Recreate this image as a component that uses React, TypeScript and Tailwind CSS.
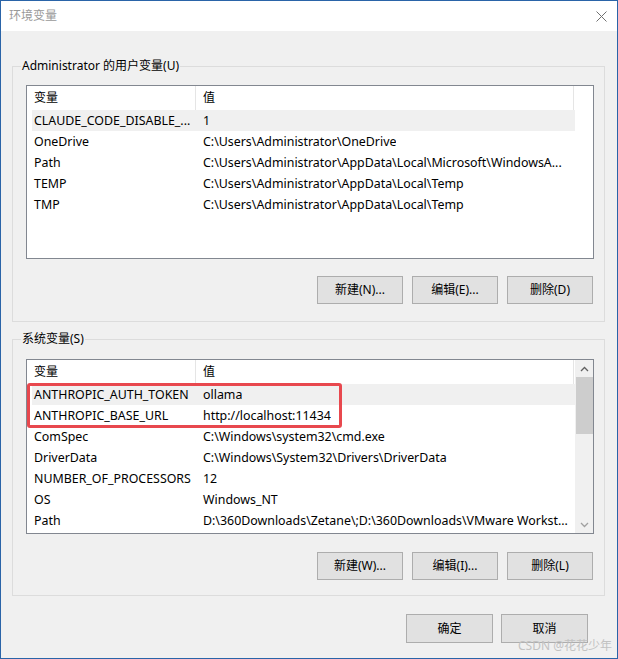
import clsx from "clsx";

type Item = { name: string; value: string; selected?: boolean };

const userVars: Item[] = [
  { name: "CLAUDE_CODE_DISABLE_...", value: "1", selected: true },
  { name: "OneDrive", value: "C:\\Users\\Administrator\\OneDrive" },
  { name: "Path", value: "C:\\Users\\Administrator\\AppData\\Local\\Microsoft\\WindowsA..." },
  { name: "TEMP", value: "C:\\Users\\Administrator\\AppData\\Local\\Temp" },
  { name: "TMP", value: "C:\\Users\\Administrator\\AppData\\Local\\Temp" },
];

const sysVars: Item[] = [
  { name: "ANTHROPIC_AUTH_TOKEN", value: "ollama", selected: true },
  { name: "ANTHROPIC_BASE_URL", value: "http://localhost:11434" },
  { name: "ComSpec", value: "C:\\Windows\\system32\\cmd.exe" },
  { name: "DriverData", value: "C:\\Windows\\System32\\Drivers\\DriverData" },
  { name: "NUMBER_OF_PROCESSORS", value: "12" },
  { name: "OS", value: "Windows_NT" },
  { name: "Path", value: "D:\\360Downloads\\Zetane\\;D:\\360Downloads\\VMware Workst..." },
];

function Button({ label, wide }: { label: string; wide?: boolean }) {
  return (
    <button
      className={clsx(
        "flex items-center justify-center border border-[#adadad] bg-[#e1e1e1] text-[12px] text-black",
        wide ? "h-[29px] w-[87px]" : "h-[28px] w-[86px]"
      )}
    >
      {label}
    </button>
  );
}

function Row({ item }: { item: Item }) {
  return (
    <div
      className={clsx(
        "ml-[5px] flex h-[21px] w-[543px] items-center whitespace-nowrap pt-px",
        item.selected && "bg-[#f0f0f0]"
      )}
    >
      <div className="w-[163px] shrink-0 overflow-hidden pl-[2px]">{item.name}</div>
      <div className="overflow-hidden pl-[8px]">{item.value}</div>
    </div>
  );
}

function VarList({ items, scroll, height }: { items: Item[]; scroll?: boolean; height: string }) {
  return (
    <div className={clsx("relative flex w-[568px] overflow-hidden border border-[#828790] bg-white text-[12.4px]", height)}>
      <div className="w-[548px] shrink-0">
        {/* column header */}
        <div className="flex h-[24px] w-[547px] items-center text-[12px]">
          <div className="w-[168px] shrink-0 pl-[7px]">变量</div>
          <div className="h-full w-px bg-[#e5e5e5]" />
          <div className="flex-1 pl-[7px]">值</div>
          <div className="h-full w-px bg-[#e5e5e5]" />
        </div>
        {items.map((it) => (
          <Row key={it.name + it.value} item={it} />
        ))}
      </div>
      {scroll && (
        <div className="flex w-[18px] shrink-0 flex-col bg-[#f0f0f0] pl-px">
          <div className="flex h-[17px] items-center justify-center">
            <svg width="9" height="6" viewBox="0 0 9 6">
              <path d="M1 5 L4.5 1.5 L8 5" fill="none" stroke="#606060" strokeWidth="1.3" />
            </svg>
          </div>
          <div className="h-[57px] bg-[#cdcdcd]" />
          <div className="flex-1" />
          <div className="flex h-[17px] items-center justify-center">
            <svg width="9" height="6" viewBox="0 0 9 6">
              <path d="M1 1 L4.5 4.5 L8 1" fill="none" stroke="#a0a0a0" strokeWidth="1.3" />
            </svg>
          </div>
        </div>
      )}
    </div>
  );
}

function Group({
  title,
  children,
  className,
}: {
  title: string;
  children: React.ReactNode;
  className?: string;
}) {
  return (
    <div className={clsx("relative ml-[11px] w-[593px] border border-[#dcdcdc]", className)}>
      <span className="absolute -top-[9px] left-[8px] bg-[#f0f0f0] px-px leading-[16px]">{title}</span>
      {children}
    </div>
  );
}

export default function App() {
  return (
    <div className="relative flex h-[659px] w-[618px] flex-col border border-[#2a64a8] bg-[#f0f0f0] font-['Noto_Sans','Noto_Sans_CJK_SC',sans-serif] text-[12px] text-black">
      {/* title bar */}
      <div className="flex h-[30px] shrink-0 items-center justify-between bg-white pl-[8px] pr-[10px]">
        <span className="text-[#999999]">环境变量</span>
        <svg width="11" height="11" viewBox="0 0 11 11">
          <path d="M0.5 0.5 L10.5 10.5 M10.5 0.5 L0.5 10.5" stroke="#707070" strokeWidth="1" />
        </svg>
      </div>

      <Group title="Administrator 的用户变量(U)" className="mt-[35px] pb-[17px] pl-[13px] pt-[18px]">
        <VarList items={userVars} height="h-[174px]" />
        <div className="mr-[11px] mt-[17px] flex justify-end gap-[9px]">
          <Button label="新建(N)..." />
          <Button label="编辑(E)..." />
          <Button label="删除(D)" />
        </div>
      </Group>

      <Group title="系统变量(S)" className="mt-[17px] pb-[15px] pl-[13px] pt-[19px]">
        <div className="relative">
          <VarList items={sysVars} scroll height="h-[175px]" />
          <div className="absolute left-px top-[24px] h-[45px] w-[315px] rounded-[3px] border-[3px] border-[#e8484e]" />
        </div>
        <div className="mr-[11px] mt-[18px] flex justify-end gap-[9px]">
          <Button label="新建(W)..." />
          <Button label="编辑(I)..." />
          <Button label="删除(L)" />
        </div>
      </Group>

      <div className="mr-[29px] mt-[18px] flex justify-end gap-[8px]">
        <Button label="确定" wide />
        <Button label="取消" wide />
      </div>

      <span className="absolute bottom-[3px] right-[5px] text-[12px] text-[#c2c2c2]">CSDN @花花少年</span>
    </div>
  );
}
